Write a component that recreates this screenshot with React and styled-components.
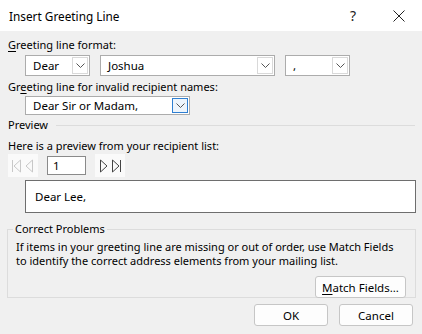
import styled, { createGlobalStyle } from "styled-components";

const GlobalStyle = createGlobalStyle`
  html, body {
    margin: 0;
    padding: 0;
    background: #f0f0f0;
  }
  body {
    font-family: "Noto Sans", "Open Sans", sans-serif;
    font-size: 11px;
    color: #000;
  }
`;

const Window = styled.div`
  width: 422px;
  height: 334px;
  background: #f0f0f0;
  display: flex;
  flex-direction: column;
  overflow: hidden;
`;

const TitleBar = styled.div`
  height: 31px;
  background: #fff;
  display: flex;
  align-items: center;
  padding-left: 9px;
  font-size: 11.8px;
  flex-shrink: 0;
`;

const Title = styled.div`
  flex: 1;
`;

const TitleButton = styled.div`
  width: 46px;
  height: 31px;
  display: flex;
  align-items: center;
  justify-content: center;
  font-size: 14px;
  color: #222;
`;

const Body = styled.div`
  display: flex;
  flex-direction: column;
  padding: 0 7px 0 8px;
`;

const Label = styled.div`
  line-height: 16px;
  margin-top: ${(p) => p.$top || 0}px;
  padding-left: ${(p) => p.$indent || 0}px;
  white-space: nowrap;
`;

const Row = styled.div`
  display: flex;
  align-items: center;
  gap: ${(p) => p.$gap || 10}px;
  margin-top: ${(p) => p.$top || 0}px;
  padding-left: ${(p) => p.$indent || 0}px;
`;

const Combo = styled.div`
  width: ${(p) => p.$w}px;
  height: ${(p) => p.$h || 21}px;
  box-sizing: border-box;
  border: 1px solid #acacac;
  background: #fff;
  display: flex;
  align-items: stretch;
`;

const ComboText = styled.div`
  flex: 1;
  padding-left: 7px;
  display: flex;
  align-items: center;
  font-size: 11.5px;
  white-space: nowrap;
  overflow: hidden;
`;

const ComboArrow = styled.div`
  width: 16px;
  margin: 1px;
  box-sizing: border-box;
  border: 1px solid ${(p) => (p.$focus ? "#2f7fd1" : "#d9d9d9")};
  background: ${(p) => (p.$focus ? "#eef5fc" : "#fff")};
  display: flex;
  align-items: center;
  justify-content: center;
`;

const Underline = styled.span`
  text-decoration: underline;
  text-underline-offset: 2px;
`;

const SectionHead = styled.div`
  display: flex;
  align-items: center;
  line-height: 16px;
  margin-top: ${(p) => p.$top || 0}px;
  &::after {
    content: "";
    flex: 1;
    height: 1px;
    background: #dcdcdc;
    margin-left: 8px;
  }
`;

const NavGroup = styled.div`
  width: 30px;
  height: 23px;
  background: #fafafa;
  display: flex;
  align-items: center;
  justify-content: space-around;
  padding: 0 2px;
  box-sizing: border-box;
`;

const RecordInput = styled.div`
  width: 39px;
  height: 19px;
  box-sizing: border-box;
  border: 1px solid #8a8a8a;
  background: #fff;
  padding-left: 5px;
  display: flex;
  align-items: center;
  font-size: 11.5px;
`;

const PreviewBox = styled.div`
  margin: 3px 0 0 17px;
  width: 391px;
  height: 33px;
  box-sizing: border-box;
  border: 1px solid #6e6e6e;
  background: #fff;
  padding-left: 9px;
  display: flex;
  align-items: center;
  font-size: 11.5px;
`;

const Group = styled.fieldset`
  margin: 8px 0 0 -1px;
  width: 409px;
  height: 77px;
  box-sizing: border-box;
  border: 1px solid #dcdcdc;
  padding: 0 9px 0 8px;
  display: flex;
  flex-direction: column;
  min-width: 0;
`;

const Legend = styled.legend`
  padding: 0 2px;
  margin-left: -3px;
  line-height: 16px;
`;

const GroupText = styled.div`
  line-height: 14px;
  margin-top: 3px;
  white-space: nowrap;
`;

const Button = styled.button`
  width: ${(p) => p.$w || 74}px;
  height: 22px;
  box-sizing: border-box;
  border: 1px solid #c6c6c6;
  border-radius: 3px;
  background: #fdfdfd;
  font-family: inherit;
  font-size: 11.5px;
  color: #000;
  padding: 0;
`;

const ButtonRow = styled.div`
  display: flex;
  justify-content: flex-end;
  gap: ${(p) => p.$gap || 11}px;
  margin-top: ${(p) => p.$top || 0}px;
  padding-right: ${(p) => p.$right || 0}px;
`;

function Chevron() {
  return (
    <svg width="9" height="6" viewBox="0 0 9 6">
      <path d="M0.5 0.5 L4.5 4.5 L8.5 0.5" fill="none" stroke="#555" strokeWidth="1" />
    </svg>
  );
}

function Dropdown({ w, value, focus, h }) {
  return (
    <Combo $w={w} $h={h}>
      <ComboText>{value}</ComboText>
      <ComboArrow $focus={focus}>
        <Chevron />
      </ComboArrow>
    </Combo>
  );
}

function NavIcon({ dir, bar, color }) {
  const left = dir === "left";
  return (
    <svg width="11" height="14" viewBox="0 0 11 14">
      {left ? (
        <>
          {bar && <line x1="1.5" y1="1" x2="1.5" y2="13" stroke={color} />}
          <path d={bar ? "M9.5 1 L3 7 L9.5 13 Z" : "M8.5 1 L2 7 L8.5 13 Z"} fill="none" stroke={color} />
        </>
      ) : (
        <>
          <path d={bar ? "M1.5 1 L8 7 L1.5 13 Z" : "M2.5 1 L9 7 L2.5 13 Z"} fill="none" stroke={color} />
          {bar && <line x1="9.5" y1="1" x2="9.5" y2="13" stroke={color} />}
        </>
      )}
    </svg>
  );
}

export default function App() {
  return (
    <Window>
      <GlobalStyle />
      <TitleBar>
        <Title>Insert Greeting Line</Title>
        <TitleButton>?</TitleButton>
        <TitleButton>
          <svg width="12" height="12" viewBox="0 0 12 12">
            <path d="M0.5 0.5 L11.5 11.5 M11.5 0.5 L0.5 11.5" stroke="#222" strokeWidth="1" />
          </svg>
        </TitleButton>
      </TitleBar>
      <Body>
        <Label $top={6}>
          <Underline>G</Underline>reeting line format:
        </Label>
        <Row $top={2} $indent={17}>
          <Dropdown w={65} value="Dear" />
          <Dropdown w={175} value="Joshua" />
          <Dropdown w={65} value="," />
        </Row>
        <Label $top={3}>
          Gr<Underline>e</Underline>eting line for invalid recipient names:
        </Label>
        <Row $top={1} $indent={17}>
          <Dropdown w={165} h={19} value="Dear Sir or Madam," focus />
        </Row>
        <SectionHead $top={2}>Preview</SectionHead>
        <Label $top={5}>Here is a preview from your recipient list:</Label>
        <Row $top={0} $gap={9} $indent={-1}>
          <NavGroup>
            <NavIcon dir="left" bar color="#c8c8c8" />
            <NavIcon dir="left" color="#c8c8c8" />
          </NavGroup>
          <RecordInput>1</RecordInput>
          <NavGroup>
            <NavIcon dir="right" color="#444" />
            <NavIcon dir="right" bar color="#444" />
          </NavGroup>
        </Row>
        <PreviewBox>Dear Lee,</PreviewBox>
        <Group>
          <Legend>Correct Problems</Legend>
          <GroupText>
            If items in your greeting line are missing or out of order, use Match Fields
            <br />
            to identify the correct address elements from your mailing list.
          </GroupText>
          <ButtonRow $top={8}>
            <Button $w={91}>
              <Underline>M</Underline>atch Fields...
            </Button>
          </ButtonRow>
        </Group>
        <ButtonRow $top={6} $right={2}>
          <Button>OK</Button>
          <Button>Cancel</Button>
        </ButtonRow>
      </Body>
    </Window>
  );
}
